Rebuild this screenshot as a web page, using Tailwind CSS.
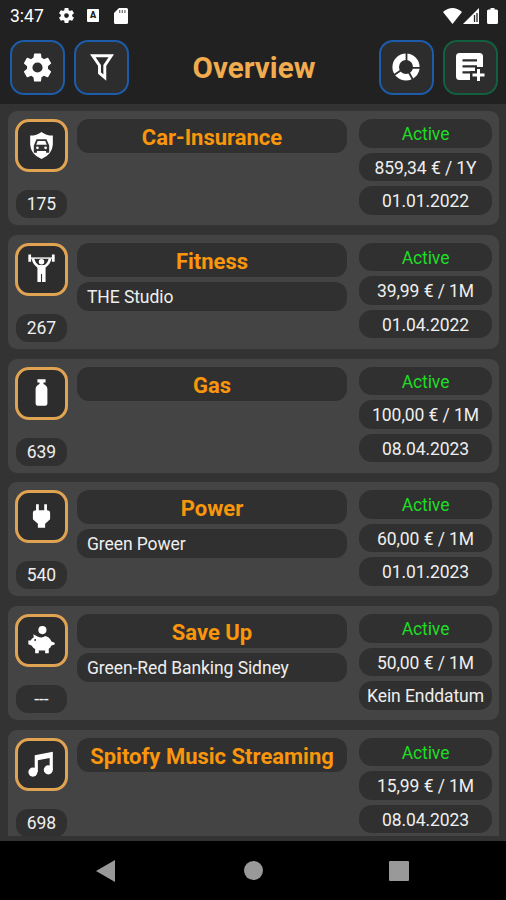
<!DOCTYPE html>
<html lang="en">
<head>
<meta charset="utf-8">
<title>Overview</title>
<script src="https://cdn.jsdelivr.net/npm/@tailwindcss/browser@4"></script>
</head>
<body class="w-[506px] h-[900px] overflow-hidden bg-[#333] font-[Roboto,sans-serif] flex flex-col">
<header class="h-[104px] shrink-0 bg-[#212121]">
  <div class="h-[31px] flex items-center pl-[10px] pr-[8px] text-white">
    <span class="text-[17.500px] leading-none w-[47px] pt-[2px]">3:47</span>
    <svg class="size-[19px]" viewBox="0 0 24 24" fill="currentColor"><path d="M19.14 12.94c.04-.3.06-.61.06-.94s-.02-.64-.07-.94l2.03-1.58a.49.49 0 0 0 .12-.61l-1.92-3.32a.49.49 0 0 0-.59-.22l-2.39.96a7 7 0 0 0-1.62-.94l-.36-2.54a.48.48 0 0 0-.48-.41h-3.84a.47.47 0 0 0-.47.41l-.36 2.54c-.59.24-1.13.57-1.62.94l-2.39-.96a.48.48 0 0 0-.59.22L2.74 8.87a.47.47 0 0 0 .12.61l2.03 1.58c-.05.3-.09.63-.09.94s.02.64.07.94l-2.03 1.58a.49.49 0 0 0-.12.61l1.92 3.32c.12.22.37.29.59.22l2.39-.96c.5.38 1.03.7 1.62.94l.36 2.54c.05.24.24.41.48.41h3.84c.24 0 .44-.17.47-.41l.36-2.54c.59-.24 1.13-.56 1.62-.94l2.39.96c.22.08.47 0 .59-.22l1.92-3.32a.47.47 0 0 0-.12-.61zM12 15a3 3 0 1 1 0-6 3 3 0 0 1 0 6z"/></svg>
    <span class="ml-[11px] w-[12px] h-[13px] rounded-[1px] bg-white text-[#212121] text-[9px] leading-[13px] font-black text-center">A</span>
    <svg class="ml-[15px] w-[14px] h-[16px]" viewBox="0 0 14 16"><path fill="#fff" d="M5 0h7.500Q14 0 14 1.500V14.500Q14 16 12.500 16H1.500Q0 16 0 14.500V5z"/><path stroke="#777" stroke-width="1.300" d="M5.700 2v3M8.300 2v3M10.900 2v3"/></svg>
    <svg class="ml-auto w-[19px] h-[16px]" viewBox="0 0 19 16"><path fill="#fff" d="M0 4Q9.500-4 19 4L9.500 16z"/></svg>
    <svg class="ml-[1px] w-[16px] h-[16px]" viewBox="0 0 16 16"><path fill="#fff" d="M16 0v16H0z"/><path stroke="#212121" stroke-width="1.300" d="M11.500 7v7M14 5v9"/></svg>
    <svg class="ml-[8px] w-[11px] h-[16px]" viewBox="0 0 11 16"><path fill="#fff" d="M3.500 0h4v1.500H9.500Q11 1.500 11 3V14.500Q11 16 9.500 16h-8Q0 16 0 14.500V3Q0 1.500 1.500 1.500h2z"/></svg>
  </div>
  <div class="flex items-center mt-[8px] pl-[10px] pr-[8px] h-[56px]">
    <div class="size-[55px] rounded-[14px] border-2 border-[#1d5cab] bg-[#2d2d2d] text-white flex items-center justify-center">
      <svg class="size-[35px]" viewBox="0 0 24 24" fill="currentColor"><path d="M19.14 12.94c.04-.3.06-.61.06-.94s-.02-.64-.07-.94l2.03-1.58a.49.49 0 0 0 .12-.61l-1.92-3.32a.49.49 0 0 0-.59-.22l-2.39.96a7 7 0 0 0-1.62-.94l-.36-2.54a.48.48 0 0 0-.48-.41h-3.84a.47.47 0 0 0-.47.41l-.36 2.54c-.59.24-1.13.57-1.62.94l-2.39-.96a.48.48 0 0 0-.59.22L2.74 8.87a.47.47 0 0 0 .12.61l2.03 1.58c-.05.3-.09.63-.09.94s.02.64.07.94l-2.03 1.58a.49.49 0 0 0-.12.61l1.92 3.32c.12.22.37.29.59.22l2.39-.96c.5.38 1.03.7 1.62.94l.36 2.54c.05.24.24.41.48.41h3.84c.24 0 .44-.17.47-.41l.36-2.54c.59-.24 1.13-.56 1.62-.94l2.39.96c.22.08.47 0 .59-.22l1.92-3.32a.47.47 0 0 0-.12-.61zM12 15.500a3.500 3.500 0 1 1 0-7 3.500 3.500 0 0 1 0 7z"/></svg>
    </div>
    <div class="ml-[9px] size-[55px] rounded-[14px] border-2 border-[#1d5cab] bg-[#2d2d2d] flex items-center justify-center">
      <svg class="w-[24px] h-[27px]" viewBox="0 0 24 27"><path fill="none" stroke="#fff" stroke-width="2.900" d="M2.700 1.700H21.300L14.800 11.500V23.500L9.500 19V11.500z"/></svg>
    </div>
    <h1 class="flex-1 text-center text-[29.600px] leading-none pt-[4px] font-bold text-[#f0ac4e]">Overview</h1>
    <div class="size-[55px] rounded-[14px] border-2 border-[#1d5cab] bg-[#2d2d2d] flex items-center justify-center">
      <svg class="mr-px size-[28px]" viewBox="0 0 28 28"><circle cx="14" cy="14" r="10.300" fill="none" stroke="#fff" stroke-width="6.600"/><path stroke="#2d2d2d" stroke-width="1.800" d="M14.500 14V0M14 14.800H28M14 14L21 27M14 14L2 22"/></svg>
    </div>
    <div class="ml-[9px] size-[55px] rounded-[14px] border-2 border-[#12603f] bg-[#2d2d2d] flex items-center justify-center">
      <svg class="w-[29px] h-[29px]" viewBox="0 0 29 29"><path fill="#fff" d="M3.500 0H23.500Q27 0 27 3.500V14H19V18H14V27H3.500Q0 27 0 23.500V3.500Q0 0 3.500 0z"/><path stroke="#2d2d2d" stroke-width="2.200" d="M6.500 7.300H21M6.500 13.300H21M6.500 19.300H15"/><path stroke="#fff" stroke-width="3" d="M22.500 16V28M16.500 22H28.500"/></svg>
    </div>
  </div>
</header>
<main id="list" class="h-[732px] shrink-0 pt-[7px] pl-[8px] pr-[7px] overflow-hidden flex flex-col gap-[9.800px]"></main>
<nav class="mt-[5px] h-[59px] shrink-0 bg-black flex items-center pl-[96px]">
  <svg class="w-[19px] h-[22px]" viewBox="0 0 19 22"><path fill="#999" d="M19 0V22L0 11z"/></svg>
  <span class="ml-[129px] size-[19px] rounded-full bg-[#999]"></span>
  <span class="ml-[126px] size-[20px] rounded-[1px] bg-[#999]"></span>
</nav>
<script>
const icons = {
  car: '<path fill="#fff" d="M16 1Q21 5 28.500 5V15Q28 26 16 31Q4 26 3.500 15V5Q11 5 16 1z"/><path fill="#333" d="M10.500 9H21.500L24.500 16V24H21V22H11V24H7.500V16z"/><path fill="#fff" d="M11.800 11H20.200L21.800 15.200H10.200z"/><circle cx="11.500" cy="18.500" r="1.500" fill="#fff"/><circle cx="20.500" cy="18.500" r="1.500" fill="#fff"/>',
  fitness: '<path fill="none" stroke="#fff" stroke-width="1.500" d="M2 4.500H30"/><path stroke="#fff" stroke-width="3" d="M3 .5V8.500M29 .5V8.500"/><circle cx="16" cy="8.500" r="3" fill="#fff"/><path fill="none" stroke="#fff" stroke-width="3" d="M6.500 5Q8 11.500 13 14H19Q24 11.500 25.500 5"/><path fill="#fff" d="M11.500 12.500H20.500V31H16.600V22H15.400V31H11.500z"/>',
  gas: '<path fill="#fff" d="M11.500 1.500H20.500V5H18.200V6.500Q22.500 8.500 22.500 12V28.500Q22.500 30.500 20.500 30.500H11.500Q9.500 30.500 9.500 28.500V12Q9.500 8.500 13.800 6.500V5H11.500z"/>',
  plug: '<path fill="#fff" d="M10 2.500H13V9H19V2.500H22V9Q25.500 9 25.500 12V19L20 24V28.500H12V24L6.500 19V12Q6.500 9 10 9z"/>',
  pig: '<circle cx="17" cy="4.500" r="4.500" fill="#fff"/><path fill="#fff" d="M7 9L11.500 11.500Q17 14 20 11Q25 12 27 17L30.500 18.500V20.500L27 21.500Q26 24 24 25V30H20V27H13V30H9V25.500Q6.500 24 5 21.500L1.500 20V16H4Q5 14 7.500 12.500z"/><circle cx="9" cy="15.500" r="1.100" fill="#333"/>',
  music: '<circle cx="6.500" cy="25.500" r="5" fill="#fff"/><circle cx="23.500" cy="23" r="5" fill="#fff"/><path fill="#fff" d="M8.500 7L28.500 3V23H25V10L12 12.500V25.500H8.500z"/>'
};
const rows = [
  ['car', '175', 'Car-Insurance', '', '859,34 € / 1Y', '01.01.2022'],
  ['fitness', '267', 'Fitness', 'THE Studio', '39,99 € / 1M', '01.04.2022'],
  ['gas', '639', 'Gas', '', '100,00 € / 1M', '08.04.2023'],
  ['plug', '540', 'Power', 'Green Power', '60,00 € / 1M', '01.01.2023'],
  ['pig', '---', 'Save Up', 'Green-Red Banking Sidney', '50,00 € / 1M', 'Kein Enddatum'],
  ['music', '698', 'Spitofy Music Streaming', '', '15,99 € / 1M', '08.04.2023']
];
document.getElementById('list').innerHTML = rows.map(([icon, num, title, sub, price, date]) => `
  <section class="h-[114px] shrink-0 rounded-[9px] bg-[#444] flex pl-[7px] pr-[7px] pt-[8px] text-[17.500px] tracking-[-0.080px] leading-[31px] text-[#eee]">
    <div class="w-[53px] shrink-0">
      <div class="size-[53px] rounded-[14px] border-[3px] border-[#dfa352] bg-[#2d2d2d] flex items-center justify-center">
        <svg class="mr-px mb-px size-[29px]" viewBox="0 0 32 32">${icons[icon]}</svg>
      </div>
      <div class="mt-[18px] mx-[1px] h-[28px] leading-[29px] rounded-[12px] bg-[#303030] text-center">${num}</div>
    </div>
    <div class="ml-[9px] w-[270px] shrink-0">
      <div class="h-[34px] rounded-[12px] bg-[#303030] text-center text-[22px] tracking-normal leading-[37px] font-bold text-[#f9960c] whitespace-nowrap">${title}</div>
      ${sub ? `<div class="mt-[5px] h-[29px] rounded-[12px] bg-[#303030] pl-[10px] whitespace-nowrap">${sub}</div>` : ''}
    </div>
    <div class="ml-[12px] w-[133px] shrink-0 flex flex-col gap-[5px] text-center whitespace-nowrap">
      <div class="h-[28.500px] rounded-[13px] bg-[#303030] text-[#1fdc25]">Active</div>
      <div class="h-[28.500px] rounded-[13px] bg-[#303030]">${price}</div>
      <div class="h-[28.500px] rounded-[13px] bg-[#303030]">${date}</div>
    </div>
  </section>`).join('');
</script>
</body>
</html>
